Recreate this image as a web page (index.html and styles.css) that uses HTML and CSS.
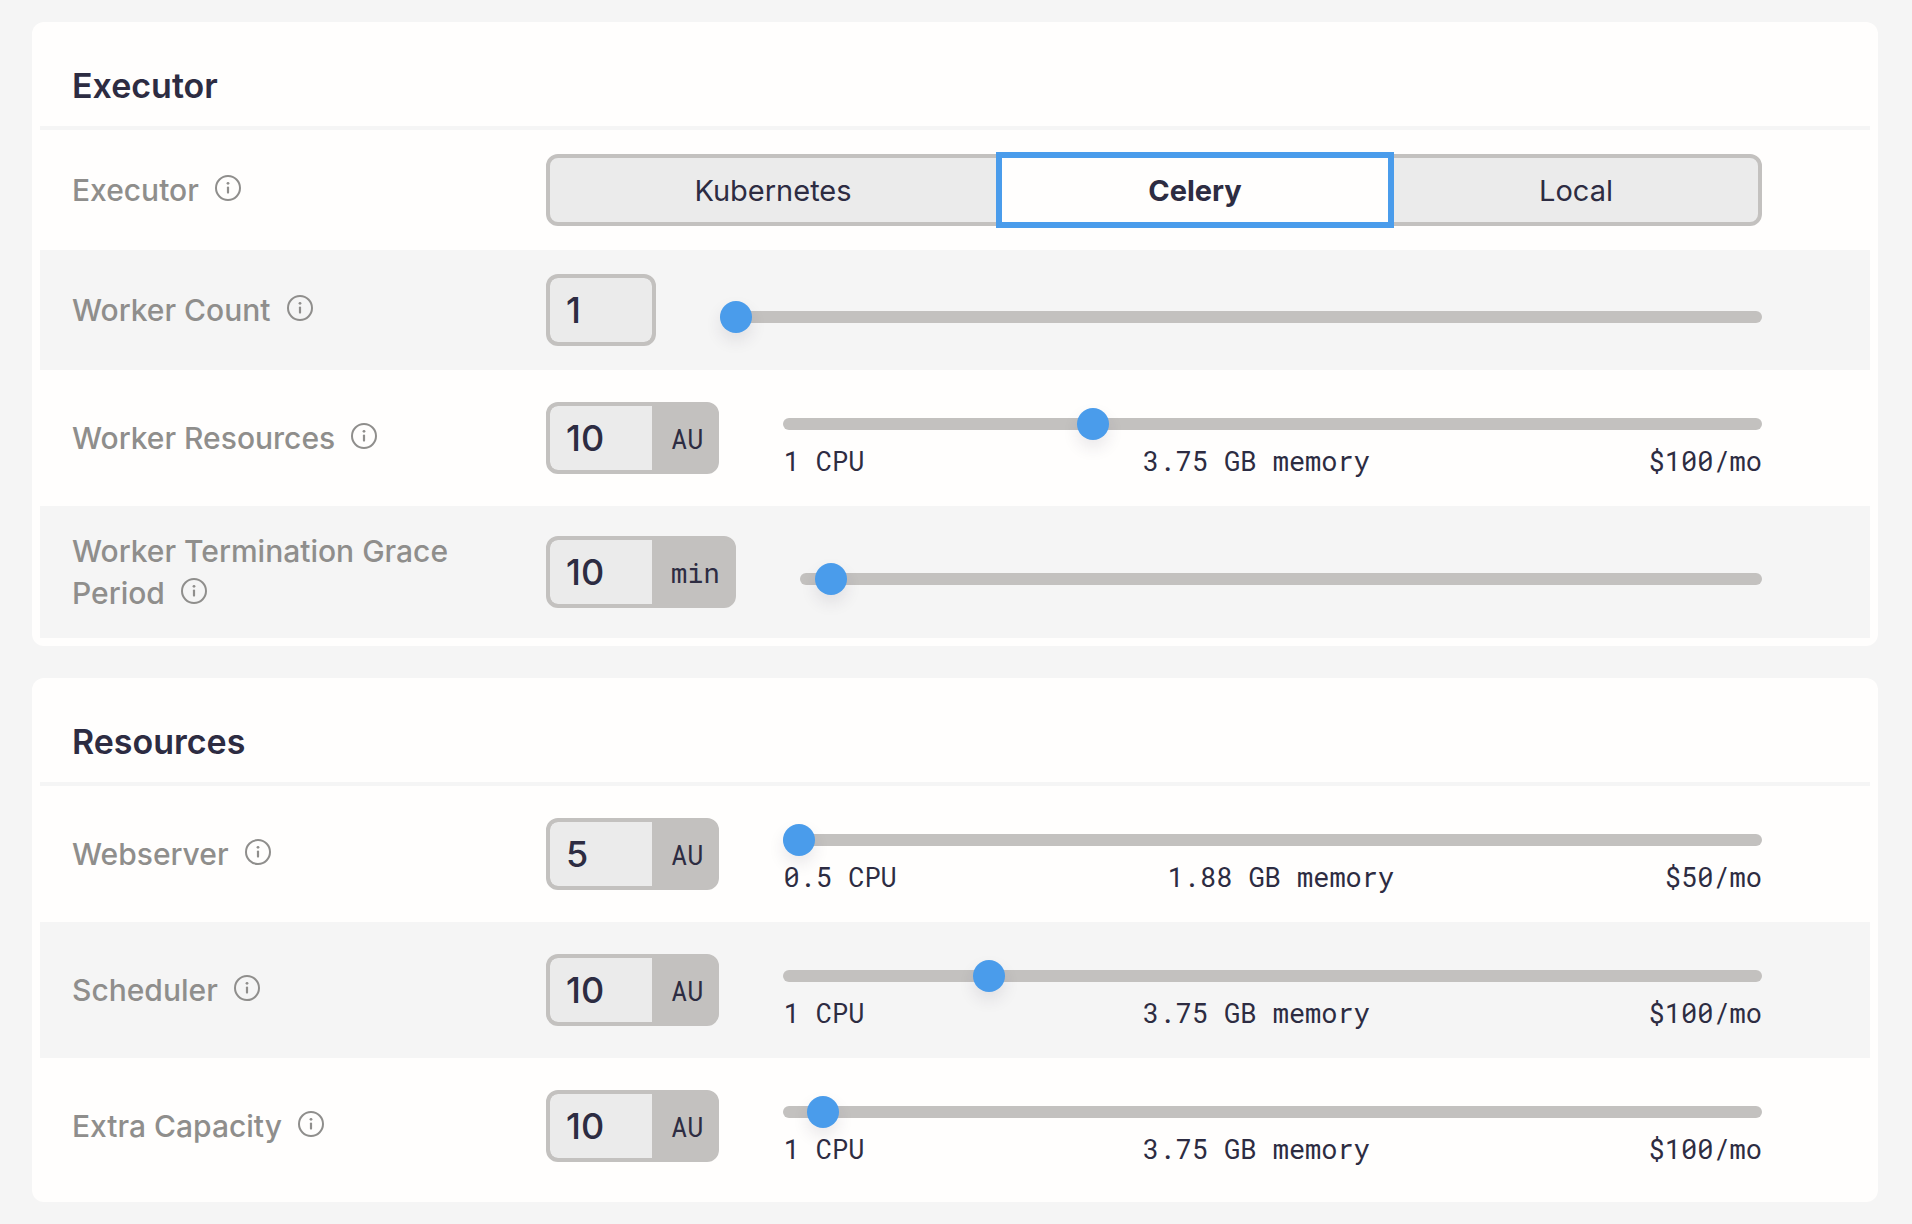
FILE: index.html
```
<!DOCTYPE html>
<html lang="en">
<head>
  <meta charset="UTF-8">
  <meta name="viewport" content="width=device-width, initial-scale=1.0">
  <title>Deployment Configuration</title>
  <link rel="stylesheet" href="styles.css">
</head>
<body>
  <!-- info icon shared by every label -->
  <svg class="sprite" aria-hidden="true">
    <symbol id="info" viewBox="0 0 26 26">
      <circle cx="13" cy="13" r="12" fill="none" stroke="currentColor" stroke-width="2"/>
      <circle cx="13" cy="8.3" r="1.4" fill="currentColor"/>
      <path d="M13 12.6v5" stroke="currentColor" stroke-width="2.2" stroke-linecap="round"/>
    </symbol>
  </svg>

  <main>
    <section class="card">
      <h2 class="card-title">Executor</h2>

      <div class="row">
        <div class="row-label">
          <span id="executor-label">Executor</span>
          <svg class="info"><use href="#info"/></svg>
        </div>
        <div class="segments" role="group" aria-labelledby="executor-label">
          <button type="button" class="segment segment-kubernetes" aria-pressed="false">Kubernetes</button>
          <button type="button" class="segment segment-celery active" aria-pressed="true">Celery</button>
          <button type="button" class="segment segment-local" aria-pressed="false">Local</button>
        </div>
      </div>

      <div class="row">
        <div class="row-label">
          <label for="worker-count">Worker Count</label>
          <svg class="info"><use href="#info"/></svg>
        </div>
        <div class="control">
          <div class="field">
            <input type="text" id="worker-count" value="1">
          </div>
          <div class="slider">
            <input type="range" min="1" max="10" value="1" aria-label="Worker Count">
          </div>
        </div>
      </div>

      <div class="row">
        <div class="row-label">
          <label for="worker-resources">Worker Resources</label>
          <svg class="info"><use href="#info"/></svg>
        </div>
        <div class="control">
          <div class="field">
            <input type="text" id="worker-resources" value="10">
            <span class="unit">AU</span>
          </div>
          <div class="slider">
            <input type="range" min="1" max="30" value="10" aria-label="Worker Resources">
            <div class="costs">
              <span>1 CPU</span>
              <span>3.75 GB memory</span>
              <span>$100/mo</span>
            </div>
          </div>
        </div>
      </div>

      <div class="row">
        <div class="row-label">
          <label for="grace-period">Worker Termination Grace Period</label>
          <svg class="info"><use href="#info"/></svg>
        </div>
        <div class="control">
          <div class="field">
            <input type="text" id="grace-period" value="10">
            <span class="unit">min</span>
          </div>
          <div class="slider">
            <input type="range" min="0" max="600" value="10" aria-label="Worker Termination Grace Period">
          </div>
        </div>
      </div>
    </section>

    <section class="card">
      <h2 class="card-title">Resources</h2>

      <div class="row">
        <div class="row-label">
          <label for="webserver">Webserver</label>
          <svg class="info"><use href="#info"/></svg>
        </div>
        <div class="control">
          <div class="field">
            <input type="text" id="webserver" value="5">
            <span class="unit">AU</span>
          </div>
          <div class="slider">
            <input type="range" min="5" max="30" value="5" aria-label="Webserver">
            <div class="costs">
              <span>0.5 CPU</span>
              <span>1.88 GB memory</span>
              <span>$50/mo</span>
            </div>
          </div>
        </div>
      </div>

      <div class="row">
        <div class="row-label">
          <label for="scheduler">Scheduler</label>
          <svg class="info"><use href="#info"/></svg>
        </div>
        <div class="control">
          <div class="field">
            <input type="text" id="scheduler" value="10">
            <span class="unit">AU</span>
          </div>
          <div class="slider">
            <input type="range" min="5" max="30" value="10" aria-label="Scheduler">
            <div class="costs">
              <span>1 CPU</span>
              <span>3.75 GB memory</span>
              <span>$100/mo</span>
            </div>
          </div>
        </div>
      </div>

      <div class="row">
        <div class="row-label">
          <label for="extra-capacity">Extra Capacity</label>
          <svg class="info"><use href="#info"/></svg>
        </div>
        <div class="control">
          <div class="field">
            <input type="text" id="extra-capacity" value="10">
            <span class="unit">AU</span>
          </div>
          <div class="slider">
            <input type="range" min="0" max="400" value="10" aria-label="Extra Capacity">
            <div class="costs">
              <span>1 CPU</span>
              <span>3.75 GB memory</span>
              <span>$100/mo</span>
            </div>
          </div>
        </div>
      </div>
    </section>
  </main>
</body>
</html>
```
FILE: styles.css
```
* {
  box-sizing: border-box;
}

body {
  margin: 0;
  background-color: #f5f5f5;
  color: #2d2c42;
  font-family: Inter, "Liberation Sans", sans-serif;
  font-size: 30px;
}

button,
input {
  margin: 0;
  color: inherit;
  font-family: inherit;
}

.sprite {
  display: none;
}

main {
  display: flex;
  flex-direction: column;
  gap: 32px;
  padding: 22px 34px 22px 32px;
}

.card {
  padding: 8px;
  background-color: #fffefd;
  border-radius: 12px;
}

.card-title {
  margin: 0;
  padding: 32px 32px 16px;
  border-bottom: 4px solid #f5f5f5;
  font-size: 34px;
  font-weight: 600;
  line-height: 48px;
}

/* Rows */
.row {
  display: grid;
  grid-template-columns: 410px 1fr;
  column-gap: 64px;
  align-items: center;
  padding: 24px 108px 24px 32px;
}

.row:nth-child(odd) {
  background-color: #f5f5f5;
}

.row-label {
  color: #8f8e8c;
  font-weight: 500;
  line-height: 42px;
}

.info {
  width: 26px;
  height: 26px;
  margin-left: 8px;
}

/* Executor switch */
.segments {
  display: flex;
  height: 72px;
  background-color: #ebebeb;
  border: 4px solid #c3c1bf;
  border-radius: 12px;
}

.segment {
  flex-basis: 0;
  padding: 0;
  background: none;
  border: none;
  font-size: 29px;
  cursor: pointer;
}

.segment-kubernetes {
  flex-grow: 446;
}

.segment-celery {
  flex-grow: 386;
}

.segment-local {
  flex-grow: 364;
}

.segment.active {
  margin: -6px 0;
  background-color: #fffefd;
  border: 6px solid #4a9ceb;
  font-weight: 700;
}

/* Text field and slider */
.control {
  display: flex;
  align-items: center;
  gap: 64px;
}

.field {
  display: flex;
  align-items: center;
  height: 72px;
  overflow: hidden;
  background-color: #c3c1bf;
  border: 4px solid #c3c1bf;
  border-radius: 12px;
}

.field input {
  width: 102px;
  height: 64px;
  padding: 0 16px;
  background-color: #ebebeb;
  border: none;
  border-radius: 8px 0 0 8px;
  font-size: 36px;
  font-weight: 500;
}

.field input:only-child {
  border-radius: 8px;
}

.unit,
.costs {
  font-family: "Roboto Mono", "DejaVu Sans Mono", monospace;
  font-size: 27px;
}

.unit {
  padding: 0 12px 0 19px;
}

.slider {
  flex: 1;
  padding-top: 14px;
}

.slider input {
  display: block;
  width: 100%;
  height: 32px;
  background: none;
  -webkit-appearance: none;
  appearance: none;
}

.slider input::-webkit-slider-runnable-track {
  height: 12px;
  background-color: #c3c1bf;
  border-radius: 6px;
}

.slider input::-webkit-slider-thumb {
  width: 32px;
  height: 32px;
  margin-top: -10px;
  background-color: #4a9ceb;
  border-radius: 50%;
  box-shadow: 0 8px 16px rgba(45, 44, 66, 0.1);
  -webkit-appearance: none;
  appearance: none;
}

.costs {
  display: flex;
  justify-content: space-between;
  line-height: 42px;
}
```
